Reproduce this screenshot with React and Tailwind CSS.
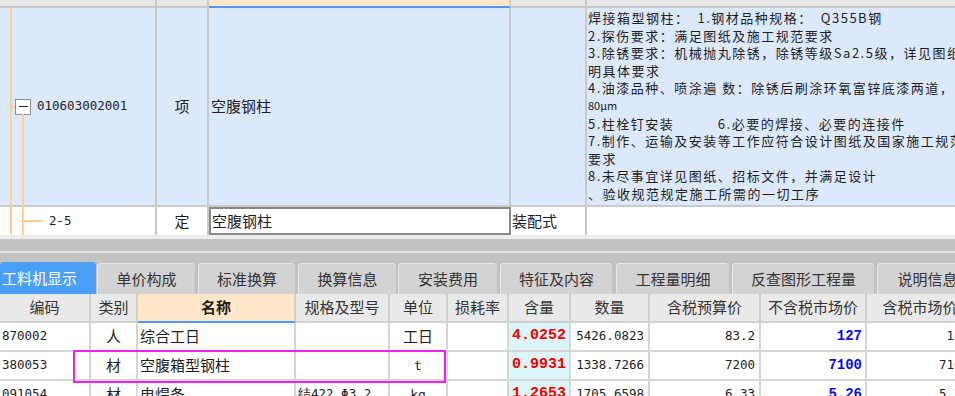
import React from "react";

const mono = "font-['DejaVu_Sans_Mono',monospace] text-[12.5px]";

const tabs = [
  { label: "工料机显示", w: "w-[96px]", active: true },
  { label: "单价构成", w: "w-[98px] ml-[1px]" },
  { label: "标准换算", w: "w-[97px] ml-[3px]" },
  { label: "换算信息", w: "w-[98px] ml-[3px]" },
  { label: "安装费用", w: "w-[99px] ml-[2px]" },
  { label: "特征及内容", w: "w-[112px] ml-[3px]" },
  { label: "工程量明细", w: "w-[113px] ml-[4px]" },
  { label: "反查图形工程量", w: "w-[142px] ml-[3px]" },
  { label: "说明信息", w: "w-[100px] ml-[3px]" },
];

const heads = ["编码", "类别", "名称", "规格及型号", "单位", "损耗率", "含量", "数量", "含税预算价", "不含税市场价", "含税市场价"];

const rows = [
  ["870002", "人", "综合工日", "", "工日", "", "4.0252", "5426.0823", "83.2", "127", "127"],
  ["380053", "材", "空腹箱型钢柱", "", "t", "", "0.9931", "1338.7266", "7200", "7100", "7100"],
  ["091054", "材", "电焊条", "结422 Φ3.2", "kg", "", "1.2653", "1705.6598", "6.33", "5.26", "5.26"],
];

const notes = [
  "焊接箱型钢柱：　1.钢材品种规格：　Q355B钢",
  "2.探伤要求：满足图纸及施工规范要求",
  "3.除锈要求：机械抛丸除锈，除锈等级Sa2.5级，详见图纸说",
  "明具体要求",
  "4.油漆品种、喷涂遍 数：除锈后刷涂环氧富锌底漆两道，",
  "80μm",
  "5.柱栓钉安装　　　6.必要的焊接、必要的连接件",
  "7.制作、运输及安装等工作应符合设计图纸及国家施工规范",
  "要求",
  "8.未尽事宜详见图纸、招标文件，并满足设计",
  "、验收规范规定施工所需的一切工序",
];

function Cell({ i, v }) {
  const base = "h-[29px] border-r-2 border-b-2 border-[#d6d6d6] flex items-center overflow-hidden whitespace-nowrap";
  if (i === 0) return <div className={`${base} pl-[2px] ${mono}`}>{v}</div>;
  if (i === 1 || i === 4)
    return <div className={`${base} justify-center ${v === "t" || v === "kg" ? mono + " text-[13px]" : "text-[15px]"}`}>{v}</div>;
  if (i === 2) return <div className={`${base} pl-[2px] text-[15px]`}>{v}</div>;
  if (i === 3) return <div className={`${base} pl-[2px] ${mono}`}>{v}</div>;
  if (i === 6)
    return (
      <div className={`${base} justify-end pr-[3px] bg-[#dcf5f8] text-[#f00000] font-bold font-['Liberation_Mono',monospace] text-[15px]`}>
        {v}
      </div>
    );
  if (i === 9)
    return (
      <div className={`${base} justify-end pr-[3px] text-[#0a0af0] font-bold font-['Liberation_Mono',monospace] text-[14px]`}>
        {v}
      </div>
    );
  return <div className={`${base} justify-end pr-[4px] ${mono}`}>{v}</div>;
}

export default function App() {
  return (
    <div className="w-[955px] h-[396px] overflow-hidden bg-white text-[#1e1e1e] font-['Noto_Sans_CJK_SC',sans-serif]">
      {/* upper grid */}
      <div className="relative grid grid-cols-[157px_52px_302px_76px_1fr] grid-rows-[8px_199px_28px] h-[235px]">
        <div className="bg-[#e8e8e8] border-r-2 border-b-2 border-[#c9c9c9]" />
        <div className="bg-[#e8e8e8] border-r-2 border-b-2 border-[#c9c9c9]" />
        <div className="bg-[#ffe6c8] border-r-2 border-[#c9c9c9] border-b-2 border-b-[#4a9af5]" />
        <div className="bg-[#e8e8e8] border-r-2 border-b-2 border-[#c9c9c9]" />
        <div className="bg-[#e8e8e8] border-b-2 border-[#c9c9c9]" />

        <div className="bg-[#dce9fc] border-r-2 border-b-2 border-[#c9c9c9] flex items-center pl-[15px]">
          <div className="w-[16px] h-[16px] border border-[#8c8c8c] bg-white flex items-center justify-center">
            <div className="w-[9px] h-[1.5px] bg-[#222]" />
          </div>
          <span className={`ml-[6px] ${mono}`}>010603002001</span>
        </div>
        <div className="bg-[#dce9fc] border-r-2 border-b-2 border-[#c9c9c9] flex items-center justify-center text-[15px]">项</div>
        <div className="bg-[#dce9fc] border-r-2 border-b-2 border-[#c9c9c9] flex items-center pl-[2px] text-[15px]">空腹钢柱</div>
        <div className="bg-[#dce9fc] border-r-2 border-b-2 border-[#c9c9c9]" />
        <div className="bg-[#dce9fc] border-b-2 border-[#c9c9c9] pt-[1px] pl-[1px] text-[13px] tracking-[1.5px] leading-[17.6px] whitespace-nowrap overflow-hidden">
          {notes.map((n, k) => (
            <div key={k} className={n === "80μm" ? "text-[11px] tracking-normal" : ""}>{n}</div>
          ))}
        </div>

        <div className="border-r-2 border-[#c9c9c9] flex items-center pl-[49px]">
          <span className={mono}>2-5</span>
        </div>
        <div className="border-r-2 border-[#c9c9c9] flex items-center justify-center text-[15px]">定</div>
        <div className="border-2 border-[#8a8a8a] flex items-center pl-[1px] text-[15px]">空腹钢柱</div>
        <div className="border-r-2 border-[#c9c9c9] flex items-center pl-[1px] text-[15px]">装配式</div>
        <div />

        {/* tree connectors */}
        <div className="absolute left-[10px] top-[8px] w-[1.5px] h-[227px] bg-[#ffcf94]" />
        <div className="absolute left-[10px] top-[106px] w-[5px] h-[1.5px] bg-[#ffcf94]" />
        <div className="absolute left-[22px] top-[114px] w-[1.5px] h-[121px] bg-[#ffcf94]" />
        <div className="absolute left-[23px] top-[220px] w-[20px] h-[1.5px] bg-[#ffcf94]" />
      </div>

      {/* splitter */}
      <div className="h-[4px] bg-[#ececec]" />
      <div className="h-[12px] bg-[#c2c2c2]" />
      <div className="h-[2px] bg-[#e6e6e6]" />

      {/* tabs */}
      <div className="h-[41px] bg-[#c2c2c2] flex items-end whitespace-nowrap">
        {tabs.map((t) =>
          t.active ? (
            <div key={t.label} className={`${t.w} shrink-0 h-[32px] rounded-t-[4px] bg-[#4aa0f7] text-white text-[15px] flex items-center pl-[2px]`}>
              {t.label}
            </div>
          ) : (
            <div
              key={t.label}
              className={`${t.w} shrink-0 h-[31px] rounded-t-[4px] bg-[#d3d3d3] border-t border-l border-[#e8e8e8] text-[#333] text-[15px] flex items-center justify-center`}
            >
              {t.label}
            </div>
          )
        )}
      </div>

      {/* lower table */}
      <div className="relative overflow-hidden">
        <div className="grid grid-cols-[91px_47px_158px_94px_58px_61px_62px_79px_111px_106px_108px] w-[975px]">
          {heads.map((h, i) =>
            i === 2 ? (
              <div key={h} className="h-[29px] bg-[#ffe6c8] border-r-2 border-[#cfcfcf] border-b-2 border-b-[#4a9af5] flex items-center justify-center text-[15px] font-bold">
                {h}
              </div>
            ) : (
              <div key={h} className="h-[29px] bg-[#e9e9e9] border-r-2 border-b-2 border-[#cfcfcf] flex items-center justify-center text-[15px] text-[#333] whitespace-nowrap">
                {h}
              </div>
            )
          )}
          {rows.map((r, ri) => r.map((v, i) => <Cell key={ri + "-" + i} i={i} v={v} />))}
        </div>
        <div className="absolute left-[73px] top-[56px] w-[373px] h-[33px] border-2 border-[#f020f0]" />
      </div>
    </div>
  );
}
